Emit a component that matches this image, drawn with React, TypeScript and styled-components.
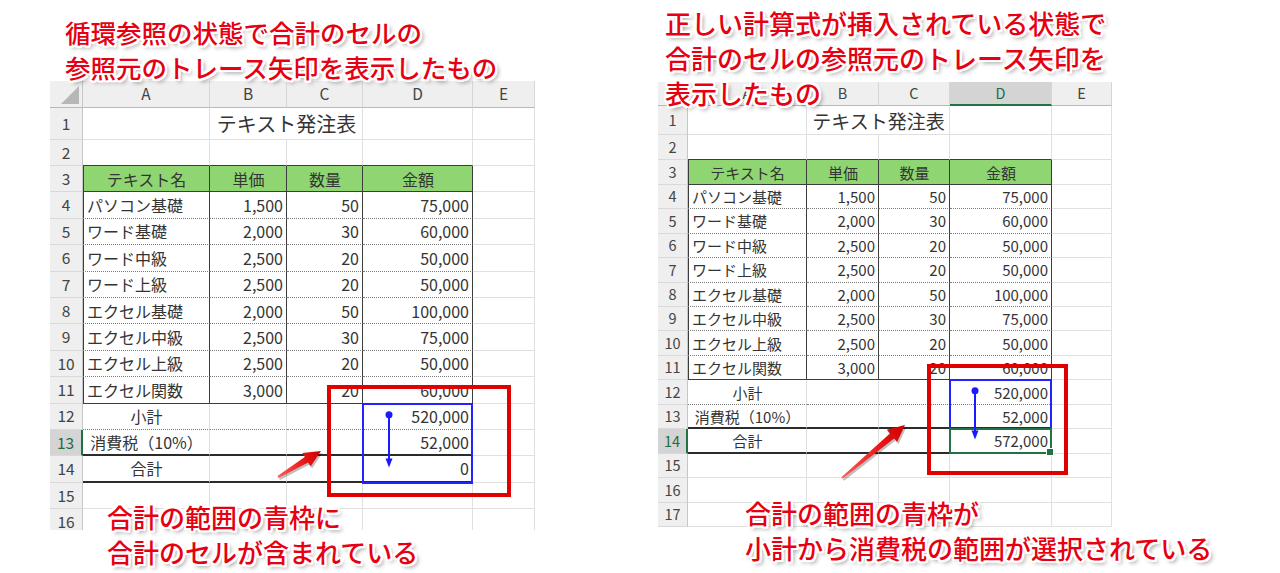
import React from "react";
import styled, { createGlobalStyle } from "styled-components";

const GlobalStyle = createGlobalStyle`
  html, body { margin: 0; padding: 0; background: #ffffff; }
  body {
    width: 1280px;
    height: 573px;
    overflow: hidden;
    font-family: "Noto Sans CJK JP", "Noto Sans", sans-serif;
  }
`;

type Edge = "grid" | "thin" | "dot" | "thick";
type Align = "left" | "right" | "center";

interface Geo {
  rowHdr: number;
  colW: number[];
  hdrH: number;
  rowH: number[];
  fs: number;
  hdrFs: number;
  titleFs: number;
  tri: number;
}

interface Rect { x: number; y: number; w: number; h: number; }
interface Arrow { tx: number; ty: number; hx: number; hy: number; }

interface SheetSpec {
  id: string;
  geo: Geo;
  clipH: number;
  selRow: number;
  selCol: number;
  total: string;
  blueLastRow: number;
  traceDx: number;
  redBox: Rect;
  pointer: Arrow;
  showSelection: boolean;
}

const sum = (a: number[]) => a.reduce((s, v) => s + v, 0);
const colX = (g: Geo, c: number) => g.rowHdr + sum(g.colW.slice(0, c));
const rowY = (g: Geo, r: number) => g.hdrH + sum(g.rowH.slice(0, r - 1));
const rowMid = (g: Geo, r: number) => rowY(g, r) + g.rowH[r - 1] / 2;

const ITEMS: string[][] = [
  ["パソコン基礎", "1,500", "50", "75,000"],
  ["ワード基礎", "2,000", "30", "60,000"],
  ["ワード中級", "2,500", "20", "50,000"],
  ["ワード上級", "2,500", "20", "50,000"],
  ["エクセル基礎", "2,000", "50", "100,000"],
  ["エクセル中級", "2,500", "30", "75,000"],
  ["エクセル上級", "2,500", "20", "50,000"],
  ["エクセル関数", "3,000", "20", "60,000"],
];

interface CellSpec { c: number; text?: string; align?: Align; span?: number; fill?: boolean; big?: boolean; }

function rowCells(r: number, total: string): CellSpec[] {
  if (r === 1)
    return [{ c: 0 }, { c: 2, text: "テキスト発注表", align: "center", span: 2, big: true }, { c: 3 }, { c: 4 }];
  if (r === 3)
    return [
      ...["テキスト名", "単価", "数量", "金額"].map((t, i) => ({ c: i, text: t, align: "center" as Align, fill: true })),
      { c: 4 },
    ];
  if (r >= 4 && r <= 11) {
    const it = ITEMS[r - 4];
    return [
      { c: 0, text: it[0], align: "left" },
      { c: 1, text: it[1], align: "right" },
      { c: 2, text: it[2], align: "right" },
      { c: 3, text: it[3], align: "right" },
      { c: 4 },
    ];
  }
  if (r >= 12 && r <= 14) {
    const lbl = r === 12 ? "小計" : r === 13 ? "消費税（10%）" : "合計";
    const val = r === 12 ? "520,000" : r === 13 ? "52,000" : total;
    return [{ c: 0, text: lbl, align: "center" }, { c: 1 }, { c: 2 }, { c: 3, text: val, align: "right" }, { c: 4 }];
  }
  return [0, 1, 2, 3, 4].map((c) => ({ c }));
}

function edges(r: number, c: number): { right: Edge; bottom: Edge; left: boolean } {
  let right: Edge = "grid";
  let bottom: Edge = "grid";
  let left = false;
  const inTable = c <= 3;
  if (r === 2 && inTable) bottom = "thin";
  if (r >= 3 && r <= 11 && inTable) {
    right = "thin";
    left = c === 0;
    bottom = r === 3 || r === 11 ? "thin" : "dot";
  }
  if (r === 12 && inTable) bottom = "dot";
  if ((r === 13 || r === 14) && inTable) bottom = "thick";
  return { right, bottom, left };
}

const edgeCss = (e: Edge) => {
  switch (e) {
    case "thin":
      return "1px solid #3c3c3c";
    case "dot":
      return "1px dotted #7a7a7a";
    case "thick":
      return "2px solid #2b2b2b";
    default:
      return "1px solid #e0e0e0";
  }
};

const Page = styled.div`
  display: flex;
  align-items: flex-start;
  width: 1280px;
  height: 573px;
  overflow: hidden;
  background: #ffffff;
`;

const Panel = styled.section<{ $ml: number; $pt: number }>`
  display: flex;
  flex-direction: column;
  align-items: flex-start;
  margin-left: ${(p) => p.$ml}px;
  padding-top: ${(p) => p.$pt}px;
`;

const Callout = styled.div<{ $size: number; $indent: number; $mt?: number }>`
  position: relative;
  z-index: 5;
  margin-left: ${(p) => p.$indent}px;
  margin-top: ${(p) => p.$mt ?? 0}px;
  font-family: "Noto Sans CJK JP", sans-serif;
  font-size: ${(p) => p.$size}px;
  line-height: 35px;
  font-weight: 500;
  color: #e60012;
  white-space: nowrap;
  text-shadow: -2px -2px 0 #fff, 2px -2px 0 #fff, -2px 2px 0 #fff, 2px 2px 0 #fff,
    0 -2px 0 #fff, 0 2px 0 #fff, -2px 0 0 #fff, 2px 0 0 #fff, -1px -2px 0 #fff,
    1px 2px 0 #fff, 2px 1px 0 #fff, -2px -1px 0 #fff, 3px 3px 4px rgba(0, 0, 0, 0.45);
`;

const SheetClip = styled.div<{ $mt: number }>`
  position: relative;
  overflow: hidden;
  margin-top: ${(p) => p.$mt}px;
  z-index: 1;
`;

const Grid = styled.div`
  display: grid;
  background: #ffffff;
`;

const HeadBase = styled.div<{ $fs: number; $sel?: boolean }>`
  box-sizing: border-box;
  display: flex;
  align-items: center;
  justify-content: center;
  background: ${(p) => (p.$sel ? "#d4d4d4" : "#efefef")};
  color: ${(p) => (p.$sel ? "#1f6b3e" : "#444444")};
  font-family: "Noto Sans CJK JP", sans-serif;
  font-size: ${(p) => p.$fs}px;
  line-height: 1;
`;

const Corner = styled(HeadBase)`
  justify-content: flex-end;
  align-items: flex-end;
  padding: 0 3px 3px 0;
  border-right: 1px solid #c6c6c6;
  border-bottom: 1px solid #b9b9b9;
`;

const CornerTri = styled.div<{ $size: number }>`
  width: 0;
  height: 0;
  border-left: ${(p) => p.$size}px solid transparent;
  border-bottom: ${(p) => p.$size}px solid #b7b7b7;
`;

const ColHead = styled(HeadBase)`
  border-right: 1px solid #d6d6d6;
  border-bottom: ${(p) => (p.$sel ? "2px solid #217346" : "1px solid #b9b9b9")};
`;

const RowHead = styled(HeadBase)`
  border-right: ${(p) => (p.$sel ? "2px solid #217346" : "1px solid #c6c6c6")};
  border-bottom: 1px solid #d9d9d9;
`;

const Cell = styled.div<{
  $right: Edge;
  $bottom: Edge;
  $left: boolean;
  $align: Align;
  $fill: boolean;
  $fs: number;
  $span: number;
}>`
  box-sizing: border-box;
  min-width: 0;
  display: flex;
  align-items: center;
  justify-content: ${(p) => (p.$align === "left" ? "flex-start" : p.$align === "right" ? "flex-end" : "center")};
  grid-column: span ${(p) => p.$span};
  padding: 0 3px 0 4px;
  border-right: ${(p) => edgeCss(p.$right)};
  border-bottom: ${(p) => edgeCss(p.$bottom)};
  box-shadow: ${(p) => (p.$left ? "inset 1px 0 0 #3c3c3c" : "none")};
  background: ${(p) => (p.$fill ? "#8fd672" : "#ffffff")};
  color: #343434;
  font-family: "Noto Sans CJK JP", sans-serif;
  font-size: ${(p) => p.$fs}px;
  line-height: 1;
  white-space: nowrap;
  overflow: hidden;
`;

const RangeBox = styled.div<{ $color: string; $w: number }>`
  position: absolute;
  box-sizing: border-box;
  border: ${(p) => p.$w}px solid ${(p) => p.$color};
  pointer-events: none;
`;

const FillHandle = styled.div`
  position: absolute;
  right: -4px;
  bottom: -4px;
  width: 6px;
  height: 6px;
  background: #217346;
  border: 1px solid #ffffff;
`;

const OverlaySvg = styled.svg`
  position: absolute;
  left: 0;
  top: 0;
  pointer-events: none;
  overflow: visible;
`;

function pointerPoints(a: Arrow) {
  const dx = a.hx - a.tx;
  const dy = a.hy - a.ty;
  const L = Math.hypot(dx, dy);
  const ux = dx / L;
  const uy = dy / L;
  const nx = -uy;
  const ny = ux;
  const headLen = 17;
  const headHalf = 8;
  const neckHalf = 3.2;
  const tailHalf = 1;
  const sx = a.hx - ux * headLen;
  const sy = a.hy - uy * headLen;
  const pts = [
    [a.tx + nx * tailHalf, a.ty + ny * tailHalf],
    [sx + nx * neckHalf, sy + ny * neckHalf],
    [sx + nx * headHalf, sy + ny * headHalf],
    [a.hx, a.hy],
    [sx - nx * headHalf, sy - ny * headHalf],
    [sx - nx * neckHalf, sy - ny * neckHalf],
    [a.tx - nx * tailHalf, a.ty - ny * tailHalf],
  ];
  return pts.map((p) => `${p[0].toFixed(1)},${p[1].toFixed(1)}`).join(" ");
}

function Sheet({ spec, mt }: { spec: SheetSpec; mt: number }) {
  const g = spec.geo;
  const nRows = g.rowH.length;
  const width = g.rowHdr + sum(g.colW);
  const cols = [g.rowHdr, ...g.colW].map((v) => `${v}px`).join(" ");
  const rows = [g.hdrH, ...g.rowH].map((v) => `${v}px`).join(" ");

  const children: React.ReactNode[] = [];
  children.push(
    <Corner key="corner" $fs={g.hdrFs}>
      <CornerTri $size={g.tri} />
    </Corner>
  );
  ["A", "B", "C", "D", "E"].forEach((l, i) =>
    children.push(
      <ColHead key={l} $fs={g.hdrFs} $sel={i === spec.selCol}>
        {l}
      </ColHead>
    )
  );
  for (let r = 1; r <= nRows; r++) {
    children.push(
      <RowHead key={`h${r}`} $fs={g.hdrFs} $sel={r === spec.selRow}>
        {r}
      </RowHead>
    );
    rowCells(r, spec.total).forEach((cs) => {
      const e = edges(r, cs.c);
      children.push(
        <Cell
          key={`c${r}-${cs.c}`}
          $right={e.right}
          $bottom={e.bottom}
          $left={e.left}
          $align={cs.align ?? "left"}
          $fill={!!cs.fill}
          $fs={cs.big ? g.titleFs : g.fs}
          $span={cs.span ?? 1}
        >
          {cs.text}
        </Cell>
      );
    });
  }

  const dLeft = colX(g, 3);
  const blueTop = rowY(g, 12) - 1;
  const blueBottom = rowY(g, spec.blueLastRow + 1) + 1;
  const tx = dLeft + spec.traceDx;
  const y1 = rowMid(g, 12) - 2;
  const y2 = rowMid(g, 14) - 2;
  const gid = `${spec.id}-grad`;

  return (
    <SheetClip $mt={mt} style={{ width, height: spec.clipH }}>
      <Grid style={{ gridTemplateColumns: cols, gridTemplateRows: rows }}>{children}</Grid>
      <RangeBox
        $color="#2323ff"
        $w={2}
        style={{ left: dLeft - 1, top: blueTop, width: g.colW[3] + 1, height: blueBottom - blueTop }}
      />
      {spec.showSelection && (
        <RangeBox
          $color="#217346"
          $w={2}
          style={{ left: dLeft - 1, top: rowY(g, 14) - 1, width: g.colW[3] + 1, height: g.rowH[13] + 1 }}
        >
          <FillHandle />
        </RangeBox>
      )}
      <RangeBox
        $color="#e10000"
        $w={4}
        style={{ left: spec.redBox.x, top: spec.redBox.y, width: spec.redBox.w, height: spec.redBox.h }}
      />
      <OverlaySvg width={width} height={spec.clipH} viewBox={`0 0 ${width} ${spec.clipH}`}>
        <defs>
          <linearGradient
            id={gid}
            gradientUnits="userSpaceOnUse"
            x1={spec.pointer.tx}
            y1={spec.pointer.ty}
            x2={spec.pointer.hx}
            y2={spec.pointer.hy}
          >
            <stop offset="0" stopColor="#ff5a5a" />
            <stop offset="0.6" stopColor="#e81818" />
            <stop offset="1" stopColor="#cc0000" />
          </linearGradient>
        </defs>
        <line x1={tx} y1={y1} x2={tx} y2={y2 - 7} stroke="#1a1aff" strokeWidth={2} />
        <circle cx={tx} cy={y1} r={3.5} fill="#1a1aff" />
        <polygon points={`${tx - 3.5},${y2 - 9} ${tx + 3.5},${y2 - 9} ${tx},${y2}`} fill="#1a1aff" />
        <polygon points={pointerPoints(spec.pointer)} fill="rgba(0,0,0,0.25)" transform="translate(1.5,2)" />
        <polygon points={pointerPoints(spec.pointer)} fill={`url(#${gid})`} />
      </OverlaySvg>
    </SheetClip>
  );
}

const leftGeo: Geo = {
  rowHdr: 33,
  colW: [127, 77, 76, 110, 62],
  hdrH: 27,
  rowH: [32, 26, ...Array(14).fill(26.4)],
  fs: 16,
  hdrFs: 15.5,
  titleFs: 20,
  tri: 18,
};

const rightGeo: Geo = {
  rowHdr: 30,
  colW: [119, 72, 71, 102, 60],
  hdrH: 24,
  rowH: [29, 25.3, ...Array(15).fill(24.46)],
  fs: 15,
  hdrFs: 14.5,
  titleFs: 19,
  tri: 16,
};

const leftSpec: SheetSpec = {
  id: "left",
  geo: leftGeo,
  clipH: 449,
  selRow: 13,
  selCol: -1,
  total: "0",
  blueLastRow: 14,
  traceDx: 26,
  redBox: { x: 277, y: 304, w: 184, h: 112 },
  pointer: { tx: 228, ty: 396, hx: 271, hy: 370 },
  showSelection: false,
};

const rightSpec: SheetSpec = {
  id: "right",
  geo: rightGeo,
  clipH: 445,
  selRow: 14,
  selCol: 3,
  total: "572,000",
  blueLastRow: 13,
  traceDx: 25,
  redBox: { x: 269, y: 282, w: 141, h: 111 },
  pointer: { tx: 184, ty: 396, hx: 247, hy: 343 },
  showSelection: true,
};

export default function App() {
  return (
    <>
      <GlobalStyle />
      <Page>
        <Panel $ml={50} $pt={14}>
          <Callout $size={25.5} $indent={15}>
            循環参照の状態で合計のセルの
            <br />
            参照元のトレース矢印を表示したもの
          </Callout>
          <Sheet spec={leftSpec} mt={-3} />
          <Callout $size={26} $indent={57} $mt={-31.5}>
            合計の範囲の青枠に
            <br />
            合計のセルが含まれている
          </Callout>
        </Panel>
        <Panel $ml={123} $pt={5}>
          <Callout $size={26} $indent={7}>
            正しい計算式が挿入されている状態で
            <br />
            合計のセルの参照元のトレース矢印を
            <br />
            表示したもの
          </Callout>
          <Sheet spec={rightSpec} mt={-28} />
          <Callout $size={26} $indent={87} $mt={-32}>
            合計の範囲の青枠が
            <br />
            小計から消費税の範囲が選択されている
          </Callout>
        </Panel>
      </Page>
    </>
  );
}
